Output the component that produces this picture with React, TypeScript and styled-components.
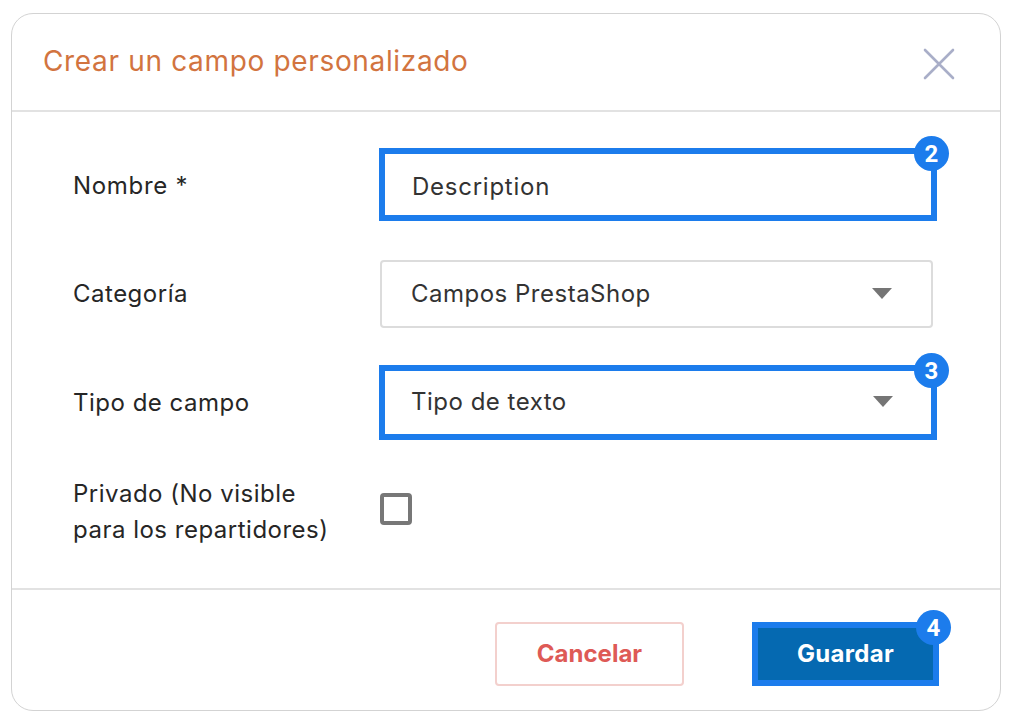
import React from 'react';
import styled, { createGlobalStyle } from 'styled-components';

const GlobalStyle = createGlobalStyle`
  html, body {
    margin: 0;
    padding: 0;
    background: #fff;
  }
  body {
    width: 1012px;
    height: 724px;
    overflow: hidden;
    font-family: Inter, "Open Sans", sans-serif;
  }
  * {
    box-sizing: border-box;
  }
`;

const CloseIcon = () => (
  <svg width="32" height="32" viewBox="0 0 32 32" fill="none">
    <path d="M2 2L30 30M30 2L2 30" stroke="#a9aec8" strokeWidth="2.6" strokeLinecap="round" />
  </svg>
);

const Arrow = () => (
  <svg width="20" height="11" viewBox="0 0 20 11">
    <path d="M0 0H20L10 11Z" fill="#757575" />
  </svg>
);

const App = () => {
  return (
    <>
      <GlobalStyle />
      <Page>
        <Card>
          <Header>
            <Title>Crear un campo personalizado</Title>
            <CloseButton>
              <CloseIcon />
            </CloseButton>
          </Header>
          <Body>
            <Row $height={73}>
              <NameLabel>Nombre *</NameLabel>
              <Highlight>
                <FieldInput type="text" value="Description" readOnly />
                <Badge>2</Badge>
              </Highlight>
            </Row>
            <Row $height={68} $top={39}>
              <Label>Categoría</Label>
              <PlainSelect>
                Campos PrestaShop
                <Arrow />
              </PlainSelect>
            </Row>
            <Row $height={75} $top={37}>
              <Label>Tipo de campo</Label>
              <Highlight>
                <SelectValue>
                  Tipo de texto
                  <Arrow />
                </SelectValue>
                <Badge>3</Badge>
              </Highlight>
            </Row>
            <PrivateRow>
              <Label>
                Privado (No visible
                <br />
                para los repartidores)
              </Label>
              <Checkbox />
            </PrivateRow>
          </Body>
          <Footer>
            <CancelButton>Cancelar</CancelButton>
            <SaveWrapper>
              <SaveButton>Guardar</SaveButton>
              <Badge>4</Badge>
            </SaveWrapper>
          </Footer>
        </Card>
      </Page>
    </>
  );
};

export default App;

const Page = styled.div`
  width: 1012px;
  height: 724px;
  padding: 13px 11px;
`;

const Card = styled.div`
  width: 990px;
  height: 698px;
  border: 1px solid #d3d3d3;
  border-radius: 22px;
  background: #fff;
  display: flex;
  flex-direction: column;
`;

const Header = styled.div`
  height: 98px;
  flex-shrink: 0;
  display: flex;
  align-items: center;
  justify-content: space-between;
  padding: 0 45px 2px 31px;
  border-bottom: 2px solid #e2e2e2;
`;

const Title = styled.h2`
  margin: 0;
  font-size: 28px;
  font-weight: 400;
  letter-spacing: 0.66px;
  color: #d2743f;
`;

const CloseButton = styled.div`
  width: 32px;
  height: 32px;
  display: flex;
  margin-top: 6px;
`;

const Body = styled.div`
  flex: 1;
  padding: 36px 0 0 61px;
  display: flex;
  flex-direction: column;
`;

const Row = styled.div<{ $height: number; $top?: number }>`
  height: ${(p) => p.$height}px;
  margin-top: ${(p) => p.$top ?? 0}px;
  display: flex;
  align-items: center;
`;

const PrivateRow = styled.div`
  margin-top: 36px;
  display: flex;
  align-items: center;
`;

const Label = styled.div`
  width: 306px;
  flex-shrink: 0;
  font-size: 24px;
  line-height: 36px;
  letter-spacing: 0.5px;
  color: #262626;
`;

const NameLabel = styled(Label)`
  padding-top: 2px;
  letter-spacing: 0.7px;
`;

const Highlight = styled.div`
  position: relative;
  width: 558px;
  height: 100%;
  border: 6px solid #1c7cec;
`;

const FieldInput = styled.input`
  width: 100%;
  height: 100%;
  border: none;
  outline: none;
  padding: 3px 0 0 27px;
  font-family: inherit;
  font-size: 24px;
  letter-spacing: 0.75px;
  color: #333;
  background: transparent;
`;

const SelectValue = styled.div`
  height: 100%;
  display: flex;
  align-items: center;
  justify-content: space-between;
  padding: 0 38px 2px 26px;
  font-size: 24px;
  letter-spacing: 0.5px;
  color: #333;
`;

const PlainSelect = styled(SelectValue)`
  width: 553px;
  margin-left: 1px;
  padding: 0 39px 2px 29px;
  border: 2px solid #dcdcdc;
  border-radius: 4px;
`;

const Badge = styled.span`
  position: absolute;
  top: -18px;
  right: -18px;
  width: 35px;
  height: 35px;
  border-radius: 50%;
  background: #1c7cec;
  color: #fff;
  font-family: Roboto, sans-serif;
  font-size: 24px;
  font-weight: 700;
  display: flex;
  align-items: center;
  justify-content: center;
`;

const Checkbox = styled.div`
  width: 32px;
  height: 32px;
  margin: -6px 0 0 1px;
  border: 4px solid #777;
  border-radius: 4px;
`;

const Footer = styled.div`
  height: 122px;
  flex-shrink: 0;
  border-top: 2px solid #e2e2e2;
  display: flex;
  justify-content: flex-end;
  align-items: flex-start;
  gap: 68px;
  padding: 32px 61px 0 0;
`;

const CancelButton = styled.div`
  width: 189px;
  height: 64px;
  padding-bottom: 2px;
  border: 2px solid #f3d0cd;
  border-radius: 4px;
  display: flex;
  align-items: center;
  justify-content: center;
  font-size: 24px;
  font-weight: 700;
  color: #de5a56;
`;

const SaveWrapper = styled.div`
  position: relative;
  width: 187px;
  height: 64px;
  border: 6px solid #1c7cec;
`;

const SaveButton = styled.div`
  height: 100%;
  padding-bottom: 2px;
  background: #0569b1;
  display: flex;
  align-items: center;
  justify-content: center;
  font-size: 24px;
  font-weight: 700;
  letter-spacing: 0.3px;
  color: #fff;
`;
